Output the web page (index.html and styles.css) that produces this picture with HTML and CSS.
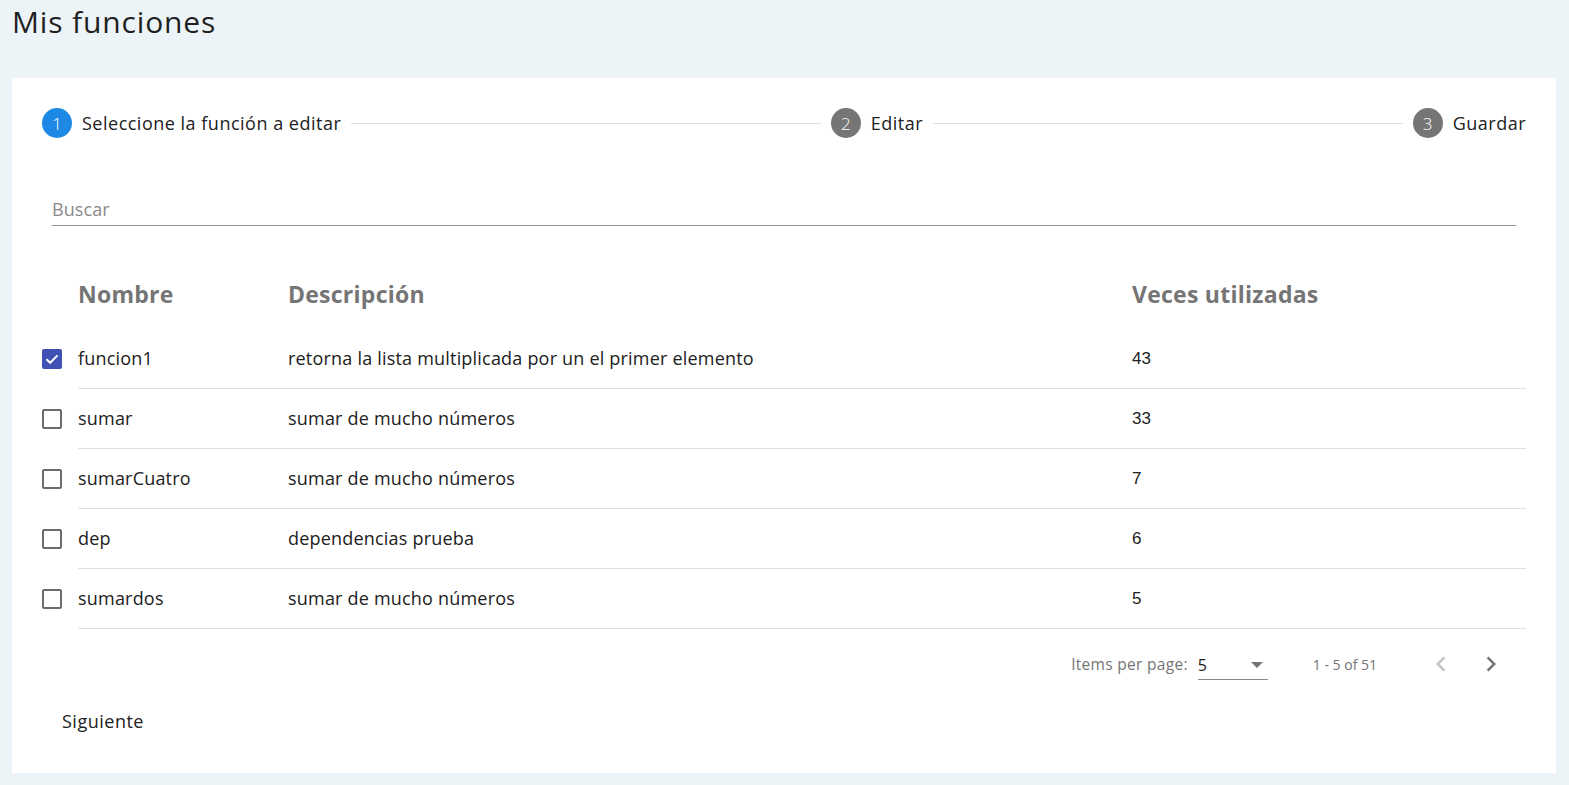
FILE: index.html
```html
<!DOCTYPE html>
<html lang="es">
<head>
<meta charset="utf-8">
<title>Mis funciones</title>
<link rel="stylesheet" href="styles.css">
</head>
<body>
<h1 class="page-title">Mis funciones</h1>
<main class="card">
  <div class="stepper">
    <div class="step">
      <span class="step-icon active">1</span>
      <span class="step-label current">Seleccione la función a editar</span>
    </div>
    <div class="step-line"></div>
    <div class="step">
      <span class="step-icon">2</span>
      <span class="step-label">Editar</span>
    </div>
    <div class="step-line"></div>
    <div class="step">
      <span class="step-icon">3</span>
      <span class="step-label">Guardar</span>
    </div>
  </div>

  <div class="search">
    <span class="search-placeholder">Buscar</span>
  </div>

  <div class="table">
    <div class="row header">
      <div class="cell check"></div>
      <div class="cell">Nombre</div>
      <div class="cell">Descripción</div>
      <div class="cell">Veces utilizadas</div>
    </div>
    <div class="row">
      <div class="cell check"><span class="checkbox checked"><svg viewBox="0 0 20 20" width="20" height="20"><path d="M4.5 10.2 L8.2 13.8 L15.5 6.4" fill="none" stroke="#fff" stroke-width="2"/></svg></span></div>
      <div class="cell">funcion1</div>
      <div class="cell">retorna la lista multiplicada por un el primer elemento</div>
      <div class="cell num">43</div>
    </div>
    <div class="row">
      <div class="cell check"><span class="checkbox"></span></div>
      <div class="cell">sumar</div>
      <div class="cell">sumar de mucho números</div>
      <div class="cell num">33</div>
    </div>
    <div class="row">
      <div class="cell check"><span class="checkbox"></span></div>
      <div class="cell">sumarCuatro</div>
      <div class="cell">sumar de mucho números</div>
      <div class="cell num">7</div>
    </div>
    <div class="row">
      <div class="cell check"><span class="checkbox"></span></div>
      <div class="cell">dep</div>
      <div class="cell">dependencias prueba</div>
      <div class="cell num">6</div>
    </div>
    <div class="row">
      <div class="cell check"><span class="checkbox"></span></div>
      <div class="cell">sumardos</div>
      <div class="cell">sumar de mucho números</div>
      <div class="cell num">5</div>
    </div>
  </div>

  <div class="paginator">
    <span class="pag-label">Items per page:</span>
    <div class="pag-select">
      <span class="pag-value">5</span>
      <span class="pag-arrow"></span>
    </div>
    <span class="pag-range">1 - 5 of 51</span>
    <button class="pag-btn disabled" aria-label="Previous page">
      <svg viewBox="0 0 24 24" width="30" height="30"><path d="M15.41 7.41L14 6l-6 6 6 6 1.41-1.41L10.83 12z" fill="currentColor"/></svg>
    </button>
    <button class="pag-btn" aria-label="Next page">
      <svg viewBox="0 0 24 24" width="30" height="30"><path d="M10 6L8.59 7.41 13.17 12l-4.58 4.59L10 18l6-6z" fill="currentColor"/></svg>
    </button>
  </div>

  <div class="actions">
    <button class="next-btn">Siguiente</button>
  </div>
</main>
</body>
</html>
```
FILE: styles.css
```css
* { box-sizing: border-box; }
html, body {
  margin: 0;
  padding: 0;
}
body {
  background: #edf4f8;
  font-family: "Open Sans", "Noto Sans", sans-serif;
  color: #212121;
  width: 1569px;
  height: 785px;
  overflow: hidden;
}
.page-title {
  margin: 0;
  height: 78px;
  padding: 0 0 0 12px;
  font-size: 30px;
  font-weight: 400;
  line-height: 44px;
  letter-spacing: 0.85px;
  color: #1f1f1f;
}
.card {
  background: #fff;
  margin: 0 13px 0 12px;
  padding: 30px 30px 30px 30px;
  height: 695px;
}
.stepper {
  display: flex;
  align-items: center;
  height: 30px;
}
.step {
  display: flex;
  align-items: center;
  gap: 10px;
}
.step-icon {
  width: 30px;
  height: 30px;
  border-radius: 50%;
  background: #757575;
  color: #fff;
  display: flex;
  align-items: center;
  justify-content: center;
  font-size: 17px;
  font-weight: 300;
}
.step-icon.active { background: #1e88e5; }
.step-label {
  font-size: 18px;
  letter-spacing: 0.5px;
  color: #212121;
}
.step-label.current { font-weight: 500; }
.step-line {
  flex: 1;
  height: 1px;
  background: #e0e0e0;
  margin: 0 10px;
}
.search {
  margin: 56px 10px 0 10px;
  height: 32px;
  border-bottom: 1px solid #8f8f8f;
  display: flex;
  align-items: center;
  padding-bottom: 1px;
}
.search-placeholder {
  font-size: 18px;
  letter-spacing: 0.1px;
  color: #8a8a8a;
}
.table {
  margin-top: 33px;
}
.row {
  display: grid;
  grid-template-columns: 36px 210px 844px 394px;
  height: 60px;
  align-items: stretch;
}
.row.header {
  height: 70px;
  font-weight: 700;
  color: #757575;
}
.cell {
  display: flex;
  align-items: center;
  border-bottom: 1px solid #e0e0e0;
  font-size: 18px;
  letter-spacing: 0.2px;
  padding-bottom: 2px;
}
.row.header .cell {
  border-bottom: none;
  font-size: 23px;
  letter-spacing: 0.25px;
  padding-bottom: 1px;
}
.cell.check { border-bottom: none; padding-bottom: 0; }
.cell.num {
  font-family: "Liberation Sans", Arial, sans-serif;
  font-size: 17px;
  letter-spacing: 0;
  padding-bottom: 0;
}
.checkbox {
  width: 20px;
  height: 20px;
  border: 2px solid #6b6b6b;
  border-radius: 2px;
  display: inline-flex;
  align-items: center;
  justify-content: center;
  position: relative;
}
.checkbox.checked {
  background: #3f51b5;
  border-color: #3f51b5;
}
.checkbox svg {
  position: absolute;
  left: -2px;
  top: -2px;
}
.paginator {
  height: 70px;
  display: flex;
  align-items: center;
  justify-content: flex-end;
  padding-right: 10px;
  color: #757575;
}
.pag-label {
  font-size: 15.5px;
  letter-spacing: 0.3px;
  margin-right: 10px;
}
.pag-select {
  width: 70px;
  height: 30px;
  border-bottom: 1px solid #8a8a8a;
  display: flex;
  align-items: center;
  justify-content: space-between;
  padding-right: 5px;
  margin-top: 2px;
}
.pag-value {
  font-size: 16px;
  color: #212121;
}
.pag-arrow {
  width: 0;
  height: 0;
  border-left: 6px solid transparent;
  border-right: 6px solid transparent;
  border-top: 6px solid #757575;
}
.pag-range {
  font-size: 14px;
  margin: 0 39px 0 45px;
}
.pag-btn {
  width: 50px;
  height: 50px;
  border: none;
  background: transparent;
  padding: 0;
  display: flex;
  align-items: center;
  justify-content: center;
  color: #757575;
}
.pag-btn.disabled { color: #c2c2c2; }
.actions {
  height: 45px;
  display: flex;
  align-items: center;
}
.next-btn {
  border: none;
  background: transparent;
  font-family: "Open Sans", sans-serif;
  font-size: 18px;
  font-weight: 500;
  letter-spacing: 0.5px;
  color: #212121;
  padding: 0 20px 2px;
  height: 45px;
}
```
